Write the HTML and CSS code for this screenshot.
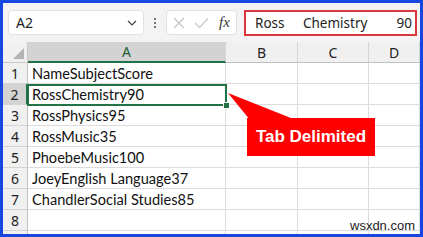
FILE: index.html
```html
<!DOCTYPE html>
<html lang="en">
<head>
    <meta charset="UTF-8">
    <title>Tab Delimited</title>
    <link rel="stylesheet" href="styles.css">
</head>
<body>
    <div class="window">
        <div class="toolbar">
            <div class="namebox">
                <span>A2</span>
                <svg class="chevron" width="10" height="6" viewBox="0 0 10 6"><path d="M1 1 L5 5 L9 1" fill="none" stroke="#444" stroke-width="1.2"/></svg>
            </div>
            <div class="grip"><i></i><i></i><i></i></div>
            <div class="fxbuttons">
                <svg width="12" height="12" viewBox="0 0 12 12"><path d="M1 1 L11 11 M11 1 L1 11" stroke="#c4c4c4" stroke-width="1.1"/></svg>
                <svg width="15" height="12" viewBox="0 0 15 12"><path d="M1 6 L5.5 10.5 L14 1.5" fill="none" stroke="#c4c4c4" stroke-width="1.1"/></svg>
                <span class="fx">fx</span>
            </div>
            <div class="formula">
                <span class="f-name">Ross</span>
                <span>Chemistry</span>
                <span class="f-num">90</span>
            </div>
        </div>
        <div class="sheet">
            <div class="corner"><span></span></div>
            <div class="colhead selected">A</div>
            <div class="colhead">B</div>
            <div class="colhead">C</div>
            <div class="colhead">D</div>

            <div class="rowhead">1</div><div class="cell">NameSubjectScore</div><div class="cell"></div><div class="cell"></div><div class="cell"></div>
            <div class="rowhead selected">2</div><div class="cell">RossChemistry90</div><div class="cell"></div><div class="cell"></div><div class="cell"></div>
            <div class="rowhead">3</div><div class="cell">RossPhysics95</div><div class="cell"></div><div class="cell"></div><div class="cell"></div>
            <div class="rowhead">4</div><div class="cell">RossMusic35</div><div class="cell"></div><div class="cell"></div><div class="cell"></div>
            <div class="rowhead">5</div><div class="cell">PhoebeMusic100</div><div class="cell"></div><div class="cell"></div><div class="cell"></div>
            <div class="rowhead">6</div><div class="cell">JoeyEnglish Language37</div><div class="cell"></div><div class="cell"></div><div class="cell"></div>
            <div class="rowhead">7</div><div class="cell">ChandlerSocial Studies85</div><div class="cell"></div><div class="cell"></div><div class="cell"></div>
            <div class="rowhead">8</div><div class="cell"></div><div class="cell"></div><div class="cell"></div><div class="cell"></div>
            <div class="rowhead"></div><div class="cell"></div><div class="cell"></div><div class="cell"></div><div class="cell"></div>

            <div class="selection"><span class="handle"></span></div>
            <svg class="pointer" width="72" height="28" viewBox="0 0 72 28"><polygon points="1,1 23,28 69,28" fill="#ff0000"/></svg>
            <div class="callout">Tab Delimited</div>
            <span class="watermark">wsxdn.com</span>
        </div>
    </div>
</body>
</html>
```

FILE: styles.css
```css
body {
    margin: 0;
    font-family: "Noto Sans", sans-serif;
}
.window {
    width: 423px;
    height: 237px;
    box-sizing: border-box;
    border: 3px solid #1746e0;
    background-color: #ffffff;
    overflow: hidden;
}
.toolbar {
    display: flex;
    align-items: center;
    height: 39px;
    padding: 0 3px 0 5px;
    background-color: #f3f3f3;
}
.namebox {
    display: flex;
    align-items: center;
    justify-content: space-between;
    width: 136px;
    height: 25px;
    box-sizing: border-box;
    padding: 0 6px 0 7px;
    background-color: #ffffff;
    border: 1px solid #e1e1e1;
    border-radius: 4px;
    font-size: 14px;
    color: #222;
}
.grip {
    display: flex;
    flex-direction: column;
    gap: 2px;
    width: 22px;
    align-items: center;
}
.grip i {
    width: 2px;
    height: 2px;
    background-color: #777;
}
.fxbuttons {
    display: flex;
    align-items: center;
    gap: 9px;
    width: 71px;
    height: 25px;
    box-sizing: border-box;
    padding: 0 5px 0 6px;
    background-color: #ffffff;
    border: 1px solid #e1e1e1;
    border-radius: 4px;
}
.fx {
    font-family: "Liberation Serif", serif;
    font-style: italic;
    font-size: 15px;
    color: #333;
    margin-left: 1px;
}
.formula {
    display: flex;
    align-items: center;
    width: 173px;
    height: 26px;
    margin-left: 7px;
    box-sizing: border-box;
    padding: 0 3px 0 9px;
    background-color: #ffffff;
    border: 2px solid #d9363e;
    font-size: 13.5px;
    color: #222;
}
.f-name {
    width: 48px;
}
.f-num {
    margin-left: auto;
}
.sheet {
    position: relative;
    display: grid;
    grid-template-columns: 25px 198px 72px 71px 1fr;
    grid-auto-rows: 21px;
    height: 192px;
    overflow: hidden;
}
.corner {
    position: relative;
    background-color: #f0f0f0;
    border-right: 1px solid #c8c8c8;
    border-bottom: 1px solid #c8c8c8;
}
.corner span {
    position: absolute;
    right: 3px;
    bottom: 3px;
    width: 0;
    height: 0;
    border-left: 11px solid transparent;
    border-bottom: 11px solid #b3b3b3;
}
.colhead {
    display: flex;
    align-items: center;
    justify-content: center;
    background-color: #f0f0f0;
    border-right: 1px solid #d4d4d4;
    border-bottom: 1px solid #c0c0c0;
    font-size: 14px;
    color: #222;
}
.colhead.selected {
    background-color: #d3d3d3;
    border-bottom: 2px solid #217346;
    color: #1b5e36;
}
.rowhead {
    display: flex;
    align-items: center;
    justify-content: center;
    background-color: #f0f0f0;
    border-right: 1px solid #c0c0c0;
    border-bottom: 1px solid #d4d4d4;
    font-size: 14px;
    color: #222;
}
.rowhead.selected {
    background-color: #d3d3d3;
    border-right: 2px solid #217346;
}
.cell {
    display: flex;
    align-items: center;
    padding-left: 4px;
    border-right: 1px solid #dcdcdc;
    border-bottom: 1px solid #dcdcdc;
    font-family: Lato, "Liberation Sans", sans-serif;
    font-size: 14.6px;
    color: #111;
    white-space: nowrap;
}
.selection {
    position: absolute;
    left: 24px;
    top: 42px;
    width: 200px;
    height: 22px;
    box-sizing: border-box;
    border: 2px solid #217346;
}
.handle {
    position: absolute;
    right: -5px;
    bottom: -5px;
    width: 5px;
    height: 5px;
    background-color: #217346;
    border: 1px solid #ffffff;
}
.pointer {
    position: absolute;
    left: 224px;
    top: 50px;
}
.callout {
    position: absolute;
    left: 244px;
    top: 76px;
    width: 128px;
    height: 38px;
    display: flex;
    align-items: center;
    justify-content: center;
    background-color: #ff0000;
    color: #ffffff;
    font-family: "Liberation Sans", Arial, sans-serif;
    font-weight: bold;
    font-size: 17px;
}
.watermark {
    position: absolute;
    left: 347px;
    top: 176px;
    font-family: "Liberation Sans", Arial, sans-serif;
    font-size: 13px;
    color: #222;
}
```
